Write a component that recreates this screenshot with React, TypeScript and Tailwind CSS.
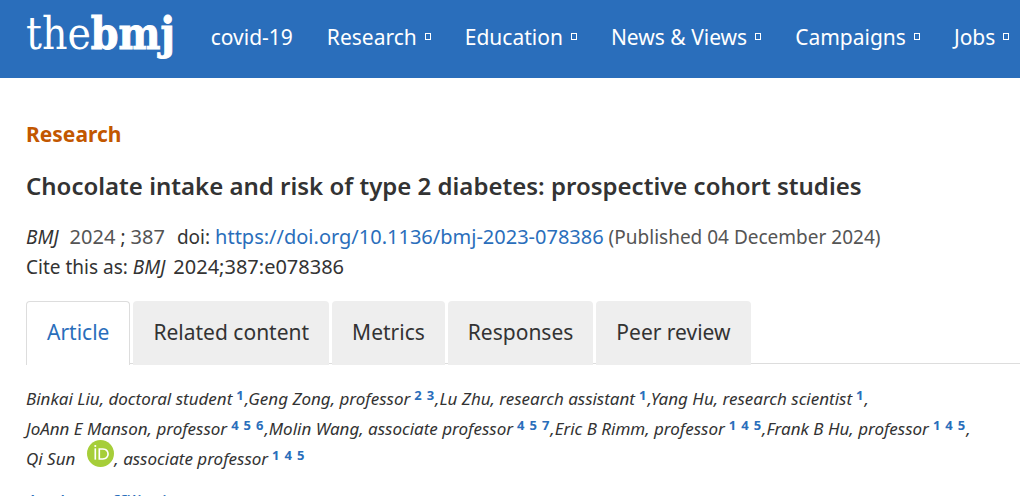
import { Fragment } from "react";

const menu = [
  { label: "covid-19", sub: false },
  { label: "Research", sub: true },
  { label: "Education", sub: true },
  { label: "News & Views", sub: true },
  { label: "Campaigns", sub: true },
  { label: "Jobs", sub: true },
];

const tabs = ["Article", "Related content", "Metrics", "Responses", "Peer review"];

const authors = [
  { name: "Binkai Liu", role: "doctoral student", refs: ["1"] },
  { name: "Geng Zong", role: "professor", refs: ["2", "3"] },
  { name: "Lu Zhu", role: "research assistant", refs: ["1"] },
  { name: "Yang Hu", role: "research scientist", refs: ["1"] },
  { name: "JoAnn E Manson", role: "professor", refs: ["4", "5", "6"] },
  { name: "Molin Wang", role: "associate professor", refs: ["4", "5", "7"] },
  { name: "Eric B Rimm", role: "professor", refs: ["1", "4", "5"] },
  { name: "Frank B Hu", role: "professor", refs: ["1", "4", "5"] },
  { name: "Qi Sun", role: "associate professor", refs: ["1", "4", "5"], orcid: true },
];

function OrcidIcon() {
  return (
    <svg viewBox="0 0 256 256" className="h-[27px] w-[27px]" aria-hidden="true">
      <circle cx="128" cy="128" r="128" fill="#a6ce39" />
      <rect x="70.9" y="79.1" width="15.4" height="107.1" fill="#fff" />
      <circle cx="78.6" cy="56.8" r="10.1" fill="#fff" />
      <path
        d="M108.9 79.1h41.6c39.6 0 57 28.3 57 53.6 0 27.5-21.5 53.6-56.8 53.6h-41.8V79.1zm15.4 93.3h24.5c34.9 0 42.9-26.5 42.9-39.7 0-21.5-13.7-39.7-43.7-39.7h-23.7v79.4z"
        fill="#fff"
      />
    </svg>
  );
}

function Header() {
  return (
    <header className="flex h-[78px] items-start overflow-hidden bg-[#2a6ebb] pl-[26px] font-['Noto_Sans',sans-serif] text-white">
      <a href="#home" className="mt-1 flex shrink-0 items-baseline font-['DejaVu_Serif_Condensed','DejaVu_Serif',serif] text-[44px] leading-[60px]">
        <span>the</span>
        <span className="font-bold [-webkit-text-stroke:1px_white]">bmj</span>
      </a>
      <nav className="mt-[25px] ml-9 flex shrink-0 gap-[34px] text-[21px] leading-6">
        {menu.map((item) => (
          <a key={item.label} href="#menu" className="flex items-center gap-2 whitespace-nowrap">
            {item.label}
            {item.sub && <span className="mb-[2px] h-[7px] w-[6px] border border-white" />}
          </a>
        ))}
      </nav>
    </header>
  );
}

export default function App() {
  return (
    <div className="h-screen overflow-hidden bg-white font-['Noto_Sans',sans-serif] text-[#333]">
      <Header />
      <main className="pl-[26px]">
        <p className="pt-10 text-[21px] leading-8 font-bold text-[#c25700]">Research</p>
        <h1 className="mt-5 text-[24px] leading-8 font-semibold">
          Chocolate intake and risk of type 2 diabetes: prospective cohort studies
        </h1>
        <div className="mt-5 text-[19px] leading-[30px]">
          <p className="flex items-baseline whitespace-pre">
            <i>BMJ</i>
            <span className="ml-[11px] text-[20px] text-[#555]">2024 </span>
            <span>; </span>
            <span className="text-[20px] text-[#555]">387</span>
            <span className="ml-3">doi: </span>
            <a href="https://doi.org/10.1136/bmj-2023-078386" className="text-[20px] text-[#2a6ebb]">
              https://doi.org/10.1136/bmj-2023-078386
            </a>
            <span className="text-[#555]"> (Published 04 December 2024)</span>
          </p>
          <p className="flex items-baseline whitespace-pre">
            Cite this as: <i>BMJ</i>
            <span className="ml-2 text-[20px]">2024;387:e078386</span>
          </p>
        </div>
        <div role="tablist" className="mt-[19px] flex gap-[3px] border-b border-[#ddd] text-[21px] leading-[30px]">
          {tabs.map((tab, i) => (
            <button
              key={tab}
              type="button"
              role="tab"
              aria-selected={i === 0}
              className={
                i === 0
                  ? "-mb-[2px] h-16 rounded-t border border-b-0 border-[#ddd] bg-white px-5 pb-[3px] text-[#2a6ebb]"
                  : "-mb-[2px] h-16 rounded-t bg-[#eee] px-5 pb-[2px]"
              }
            >
              {tab}
            </button>
          ))}
        </div>
        <p className="mt-5 text-[17px] leading-[30px] italic">
          {authors.map((author, i) => (
            <Fragment key={author.name}>
              {(i === 4 || i === 8) && <br />}
              {author.name}
              {author.orcid && (
                <a href="#orcid" aria-label="ORCID" className="-mt-2 ml-3 inline-block h-[27px] align-[-2px]">
                  <OrcidIcon />
                </a>
              )}
              , {author.role}
              <span className="mr-px ml-1 inline-flex gap-[5px] align-[5px] text-[13px] leading-none font-bold text-[#2a6ebb] not-italic">
                {author.refs.map((ref) => (
                  <a key={ref} href="#aff">{ref}</a>
                ))}
              </span>
              {i < authors.length - 1 && ","}
            </Fragment>
          ))}
        </p>
        <h2 className="mt-[14px] text-[21px] leading-[30px] font-normal text-[#2a6ebb]">Author affiliations</h2>
      </main>
    </div>
  );
}
